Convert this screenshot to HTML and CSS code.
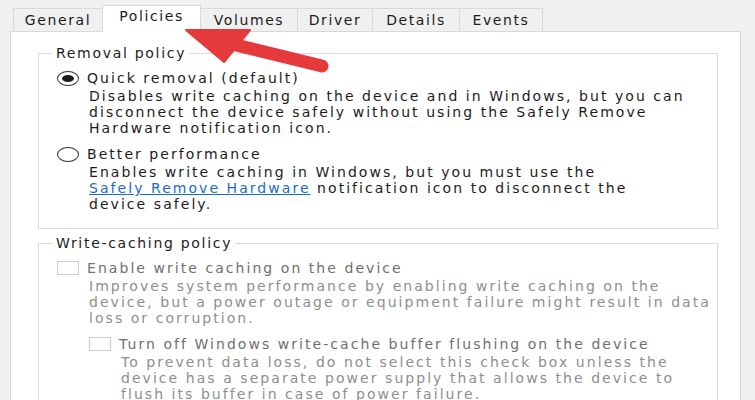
FILE: index.html
```html
<!DOCTYPE html>
<html>
<head>
<meta charset="utf-8">
<link rel="stylesheet" href="styles.css">
</head>
<body>
<div class="dialog">
  <div class="tabs">
    <div class="tab t-general">General</div>
    <div class="tab tab-active t-policies">Policies</div>
    <div class="tab t-volumes">Volumes</div>
    <div class="tab t-driver">Driver</div>
    <div class="tab t-details">Details</div>
    <div class="tab t-events">Events</div>
  </div>
  <div class="panel">
    <fieldset class="group">
      <legend class="legend">Removal policy</legend>
      <div class="option first">
        <span class="radio checked"><span class="dot"></span></span>
        <span class="label">Quick removal (default)</span>
      </div>
      <div class="desc">Disables write caching on the device and in Windows, but you can<br>disconnect the device safely without using the Safely Remove<br>Hardware notification icon.</div>
      <div class="option second">
        <span class="radio"></span>
        <span class="label">Better performance</span>
      </div>
      <div class="desc">Enables write caching in Windows, but you must use the<br><span class="link">Safely Remove Hardware</span> notification icon to disconnect the<br>device safely.</div>
    </fieldset>
    <fieldset class="group group2">
      <legend class="legend">Write-caching policy</legend>
      <div class="option first">
        <span class="check"></span>
        <span class="label disabled">Enable write caching on the device</span>
      </div>
      <div class="desc disabled-desc">Improves system performance by enabling write caching on the<br>device, but a power outage or equipment failure might result in data<br>loss or corruption.</div>
      <div class="sub">
        <div class="option second">
          <span class="check"></span>
          <span class="label disabled">Turn off Windows write-cache buffer flushing on the device</span>
        </div>
        <div class="desc disabled-desc">To prevent data loss, do not select this check box unless the<br>device has a separate power supply that allows the device to<br>flush its buffer in case of power failure.</div>
      </div>
    </fieldset>
  </div>
  <svg class="arrow" width="755" height="400" viewBox="0 0 755 400">
    <line x1="232" y1="44" x2="322" y2="66" stroke="#e5393b" stroke-width="13" stroke-linecap="round"/>
    <polygon points="186,30 250,30 224,62" fill="#e5393b" stroke="#e5393b" stroke-width="2" stroke-linejoin="round"/>
  </svg>
</div>
</body>
</html>
```
FILE: styles.css
```css
html, body {
  margin: 0;
  padding: 0;
  background: #f0f0f0;
}
body {
  font-family: "DejaVu Sans", "Liberation Sans", sans-serif;
  font-size: 14px;
  line-height: 16px;
  color: #1c1c1c;
  letter-spacing: 2.05px;
  overflow: hidden;
  width: 755px;
  height: 400px;
}
.dialog {
  position: relative;
  width: 755px;
  height: 400px;
}
.tabs {
  display: flex;
  align-items: flex-end;
  height: 31px;
  padding-left: 13px;
  box-sizing: border-box;
}
.tab {
  height: 23px;
  box-sizing: border-box;
  border: 1px solid #d9d9d9;
  border-bottom: none;
  background: #f0f0f0;
  margin-right: -1px;
  display: flex;
  justify-content: center;
  padding-top: 3px;
  letter-spacing: 1.6px;
}
.tab-active {
  height: 27px;
  background: #fff;
  position: relative;
  z-index: 2;
  margin-bottom: -1px;
  padding-top: 2px;
}
.t-general { width: 90px; }
.t-policies { width: 99px; }
.t-volumes { width: 98px; }
.t-driver { width: 76px; }
.t-details { width: 88px; }
.t-events { width: 84px; }
.panel {
  margin-left: 10px;
  width: 731px;
  height: 400px;
  box-sizing: border-box;
  background: #fff;
  border: 1px solid #d9d9d9;
  padding: 13px 22px 0 27px;
}
.group {
  margin: 0;
  padding: 0 0 16px 0;
  border: 1px solid #dcdcdc;
  min-width: 0;
}
.group2 {
  margin-top: 6px;
}
.legend {
  margin-left: 14px;
  padding: 0 3px;
  line-height: 16px;
  letter-spacing: 1.7px;
}
.option {
  display: flex;
  align-items: center;
  height: 16px;
  padding-left: 18px;
}
.option.first { margin-top: 9px; }
.option.second { margin-top: 10px; }
.label {
  margin-left: 8px;
}
.radio {
  width: 20px;
  height: 13px;
  border: 1px solid #333;
  border-radius: 50%;
  display: flex;
  align-items: center;
  justify-content: center;
  flex: none;
}
.dot {
  width: 12px;
  height: 7px;
  border-radius: 50%;
  background: #1a1a1a;
}
.check {
  width: 22px;
  height: 14px;
  box-sizing: border-box;
  border: 1px solid #cccccc;
  background: #fff;
  flex: none;
}
.desc {
  margin-top: 2px;
  padding-left: 50px;
  white-space: nowrap;
}
.link {
  color: #1a6ccb;
  text-decoration: underline;
}
.disabled {
  color: #6f6f6f;
}
.disabled-desc {
  color: #8e8e8e;
}
.sub {
  padding-left: 32px;
}
.sub .option { padding-left: 18px; }
.sub .desc { padding-left: 50px; }
.arrow {
  position: absolute;
  left: 0;
  top: 0;
  pointer-events: none;
  z-index: 5;
}
```
